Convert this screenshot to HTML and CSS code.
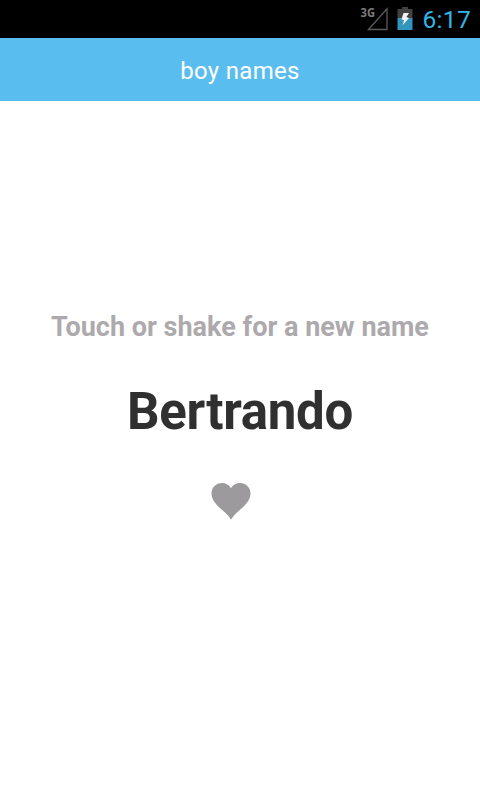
FILE: index.html
```html
<!doctype html>
<html lang="en">
<head>
	<meta charset="utf-8">
	<title>boy names</title>
	<link rel="stylesheet" href="styles.css">
</head>

<body>
	<div id="status-bar">
		<svg class="signal" width="28" height="28" viewBox="0 0 28 28">
			<text x="0.5" y="13" textLength="14.5" lengthAdjust="spacingAndGlyphs">3G</text>
			<path d="M8.500 25.500 L27 4.800 V25.500 Z" fill="none" stroke="#5a5a5a" stroke-width="1.3"/>
		</svg>
		<svg class="battery" width="16" height="24" viewBox="0 0 16 24">
			<path d="M5 0 h6 v2 h4.500 v9 h-15 v-9 h4.500 z" fill="#424242"/>
			<rect x="0.5" y="11" width="15" height="12" fill="#3195bd"/>
			<path d="M6.500 6 L12 6 L9.500 10 L12 11 L5.500 18.500 L7 13.200 L4.500 12.200 Z" fill="#f2f2f2"/>
		</svg>
		<span class="clock">6:17</span>
	</div>

	<div id="head">
		<h1>boy names</h1>
	</div>

	<div id="main">
		<p class="hint">Touch or shake for a new name</p>
		<h2 class="name">Bertrando</h2>
		<svg class="heart" width="40" height="38" viewBox="0 0 40 38">
			<path d="M20 37.800 C18.500 35 16.500 33 14 30.500 C8 25 0.500 19.500 0.500 11.500 C0.500 5.500 5 1 11 1 C15 1 18.300 3 20 6.200 C21.700 3 25 1 29 1 C35 1 39.500 5.500 39.500 11.500 C39.500 19.500 32 25 26 30.500 C23.500 33 21.500 35 20 37.800 Z" fill="#9c9a9c"/>
		</svg>
	</div>
</body>
</html>
```

FILE: styles.css
```css
*{ margin: 0; padding: 0; box-sizing: border-box; }

body{
	height: 800px; overflow: hidden;
	display: flex; flex-direction: column;
	font-family: Roboto, sans-serif;
	background-color: white; }

#status-bar{
	height: 38px; padding-right: 9px;
	display: flex; justify-content: flex-end; align-items: flex-start;
	background-color: black; }
.signal{ margin-top: 4px; margin-right: 9px; overflow: visible; }
.signal text{
	font-family: "Open Sans", sans-serif;
	font-size: 12px; font-weight: bold;
	fill: #7b7b7b; }
.battery{ margin-top: 7px; margin-right: 10px; }
.clock{
	font-size: 24.5px; line-height: 40px; letter-spacing: 0.3px;
	color: #31b6e7; }

#head{
	height: 63px; padding-top: 2px;
	display: flex; justify-content: center; align-items: center;
	background-color: #5abdef; }
#head h1{
	font-size: 24px; font-weight: normal; letter-spacing: 0.3px;
	color: white; }

#main{
	flex: 1; padding-top: 209px;
	display: flex; flex-direction: column; align-items: center; }
.hint{
	font-size: 27px; line-height: 34px; font-weight: bold;
	color: #adaaad; }
.name{
	margin-top: 36px;
	font-size: 51px; line-height: 64px; font-weight: bold; letter-spacing: -0.3px;
	color: #313031; }
.heart{ margin-top: 38px; margin-right: 19px; }
```
